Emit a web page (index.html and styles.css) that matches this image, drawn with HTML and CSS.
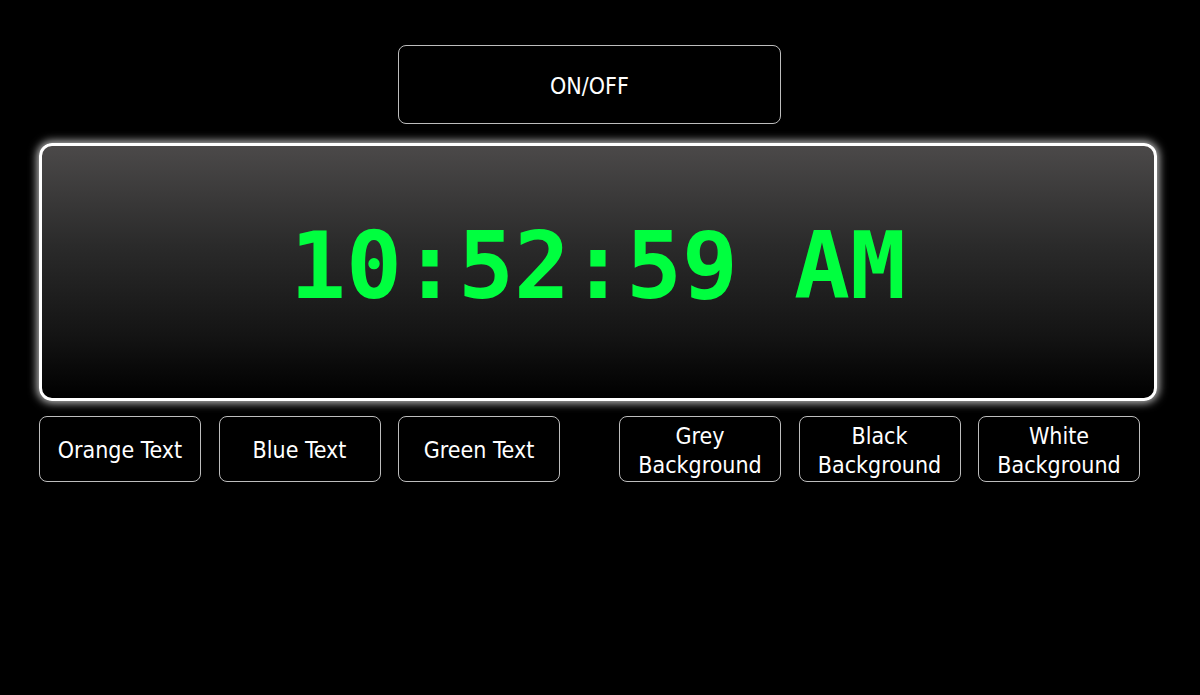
FILE: index.html
```html
<!DOCTYPE html>
<html>
<head>
<meta charset="utf-8">
<link rel="stylesheet" href="styles.css">
</head>
<body>
<div class="page">
  <div class="top">
    <button class="btn power">ON/OFF</button>
  </div>
  <div class="clock">
    <div class="time">10:52:59 AM</div>
  </div>
  <div class="controls">
    <div class="group">
      <button class="btn opt">Orange Text</button>
      <button class="btn opt">Blue Text</button>
      <button class="btn opt">Green Text</button>
    </div>
    <div class="group">
      <button class="btn opt">Grey<br>Background</button>
      <button class="btn opt">Black<br>Background</button>
      <button class="btn opt">White<br>Background</button>
    </div>
  </div>
</div>
</body>
</html>
```
FILE: styles.css
```css
html, body {
  margin: 0;
  padding: 0;
  background: #000;
  height: 100%;
}
.page {
  padding: 45px 43px 0 39px;
  display: flex;
  flex-direction: column;
}
.top {
  display: flex;
  padding-left: 359px;
}
.btn {
  background: #000;
  color: #fff;
  border: 1.5px solid #bdbdbd;
  border-radius: 8px;
  font-family: "DejaVu Sans", sans-serif;
  font-stretch: condensed;
  font-size: 23px;
  line-height: 29px;
  padding: 3px 0 0 0;
  margin: 0;
  cursor: pointer;
}
.power {
  width: 383px;
  height: 79px;
}
.clock {
  margin-top: 19px;
  height: 252px;
  border: 3px solid #fff;
  border-radius: 13px;
  box-shadow: 0 0 8px 2px rgba(255, 255, 255, 0.75);
  background: linear-gradient(to bottom, #4b4949 0%, #2a2a2a 40%, #141414 75%, #000 100%);
  display: flex;
  align-items: center;
  justify-content: center;
}
.time {
  font-family: "DejaVu Sans Mono", monospace;
  font-weight: bold;
  font-size: 93px;
  color: #00ff3f;
  margin-top: -12px;
  white-space: pre;
}
.controls {
  margin-top: 15px;
  display: flex;
  gap: 59px;
}
.group {
  display: flex;
  gap: 17.5px;
}
.opt {
  width: 162px;
  height: 66px;
}
```
